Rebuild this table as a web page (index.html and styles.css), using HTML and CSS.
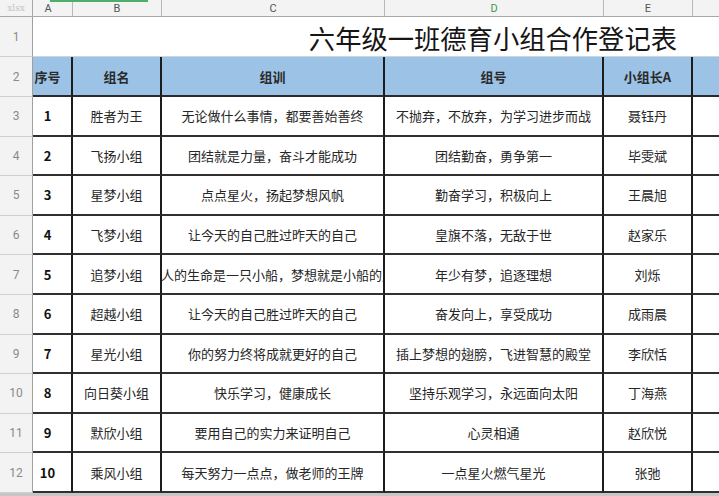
FILE: index.html
```html
<!DOCTYPE html>
<html lang="zh">
<head>
<meta charset="utf-8">
<title>六年级一班德育小组合作登记表</title>
<link rel="stylesheet" href="styles.css">
</head>
<body>
<div class="topbar"></div>
<div class="sheet">
  <div class="corner">xlsx</div>
  <div class="colh cola">A</div>
  <div class="colh">B</div>
  <div class="colh">C</div>
  <div class="colh sel">D</div>
  <div class="colh">E</div>
  <div class="colh last"></div>

  <div class="rowh">1</div>
  <div class="title">六年级一班德育小组合作登记表</div>

  <div class="rowh">2</div>
  <div class="hd cola">序号</div>
  <div class="hd">组名</div>
  <div class="hd">组训</div>
  <div class="hd">组号</div>
  <div class="hd">小组长A</div>
  <div class="hd last"></div>

  <div class="rowh">3</div>
  <div class="c num cola">1</div><div class="c">胜者为王</div><div class="c">无论做什么事情，都要善始善终</div><div class="c">不抛弃，不放弃，为学习进步而战</div><div class="c">聂钰丹</div><div class="c last"></div>

  <div class="rowh">4</div>
  <div class="c num cola">2</div><div class="c">飞扬小组</div><div class="c">团结就是力量，奋斗才能成功</div><div class="c">团结勤奋，勇争第一</div><div class="c">毕雯斌</div><div class="c last"></div>

  <div class="rowh">5</div>
  <div class="c num cola">3</div><div class="c">星梦小组</div><div class="c">点点星火，扬起梦想风帆</div><div class="c">勤奋学习，积极向上</div><div class="c">王晨旭</div><div class="c last"></div>

  <div class="rowh">6</div>
  <div class="c num cola">4</div><div class="c">飞梦小组</div><div class="c">让今天的自己胜过昨天的自己</div><div class="c">皇旗不落，无敌于世</div><div class="c">赵家乐</div><div class="c last"></div>

  <div class="rowh">7</div>
  <div class="c num cola">5</div><div class="c">追梦小组</div><div class="c clip"><span class="clipin">每个人的生命是一只小船，梦想就是小船的风帆</span></div><div class="c">年少有梦，追逐理想</div><div class="c">刘烁</div><div class="c last"></div>

  <div class="rowh">8</div>
  <div class="c num cola">6</div><div class="c">超越小组</div><div class="c">让今天的自己胜过昨天的自己</div><div class="c">奋发向上，享受成功</div><div class="c">成雨晨</div><div class="c last"></div>

  <div class="rowh">9</div>
  <div class="c num cola">7</div><div class="c">星光小组</div><div class="c">你的努力终将成就更好的自己</div><div class="c">插上梦想的翅膀，飞进智慧的殿堂</div><div class="c">李欣恬</div><div class="c last"></div>

  <div class="rowh">10</div>
  <div class="c num cola">8</div><div class="c">向日葵小组</div><div class="c">快乐学习，健康成长</div><div class="c">坚持乐观学习，永远面向太阳</div><div class="c">丁海燕</div><div class="c last"></div>

  <div class="rowh">11</div>
  <div class="c num cola">9</div><div class="c">默欣小组</div><div class="c">要用自己的实力来证明自己</div><div class="c">心灵相通</div><div class="c">赵欣悦</div><div class="c last"></div>

  <div class="rowh">12</div>
  <div class="c num cola">10</div><div class="c">乘风小组</div><div class="c">每天努力一点点，做老师的王牌</div><div class="c">一点星火燃气星光</div><div class="c">张弛</div><div class="c last"></div>
</div>
</body>
</html>
```

FILE: styles.css
```css
html, body {
  margin: 0;
  padding: 0;
  background: #c6c6c6;
  overflow: hidden;
}

body {
  font-family: "Noto Sans CJK SC", "Noto Sans", sans-serif;
  color: #222;
  position: relative;
  width: 719px;
  height: 496px;
}

.topbar {
  position: absolute;
  left: 50px;
  top: 0;
  width: 98px;
  height: 2px;
  background: #4fae6a;
  z-index: 2;
}

.sheet {
  display: grid;
  grid-template-columns: 33px 40px 89px 223px 219px 89px 1fr;
  grid-template-rows: 17px 40px 40px repeat(10, 39.6px);
  background: #fff;
  width: 740px;
}

.sheet > div {
  box-sizing: border-box;
  display: flex;
  align-items: center;
  justify-content: center;
  white-space: nowrap;
  overflow: hidden;
}

.corner {
  background: #f3f3f3;
  color: #c4c4c4;
  font-family: "DejaVu Serif", serif;
  font-size: 9px;
  border-right: 1px solid #a8a8a8;
  border-bottom: 1px solid #a8a8a8;
}

.colh {
  background: #f3f3f3;
  color: #555;
  font-family: Roboto, "Noto Sans", sans-serif;
  font-size: 11px;
  border-right: 1px solid #b8b8b8;
  border-bottom: 1px solid #a8a8a8;
}

.colh.sel {
  color: #3e9a4e;
}

.rowh {
  background: #f3f3f3;
  color: #8a8a8a;
  font-family: Roboto, "Noto Sans", sans-serif;
  font-size: 12px;
  border-right: 1px solid #a0a0a0;
  border-bottom: 1px solid #d0d0d0;
}

.title {
  grid-column: 2 / -1;
  justify-content: flex-end !important;
  padding-right: 63px;
  font-size: 26.3px;
  color: #151515;
  border-bottom: 1px solid #c9d5df;
  padding-top: 1px;
}

.hd {
  background: #9cc3e6;
  font-size: 13px;
  font-weight: bold;
  color: #2a2a2a;
  border-right: 2px solid #1c1c1c;
  border-bottom: 2px solid #2a2a2a;
}

.c {
  font-size: 13px;
  color: #262626;
  border-right: 2px solid #1c1c1c;
  border-bottom: 2px solid #303030;
}

.clip {
  padding-right: 2px;
}

.clipin {
  flex: none;
}

.cola {
  padding-right: 9px;
}

.num {
  font-weight: bold;
  font-size: 13px;
  color: #111;
}

.last {
  border-right: none !important;
}
```
